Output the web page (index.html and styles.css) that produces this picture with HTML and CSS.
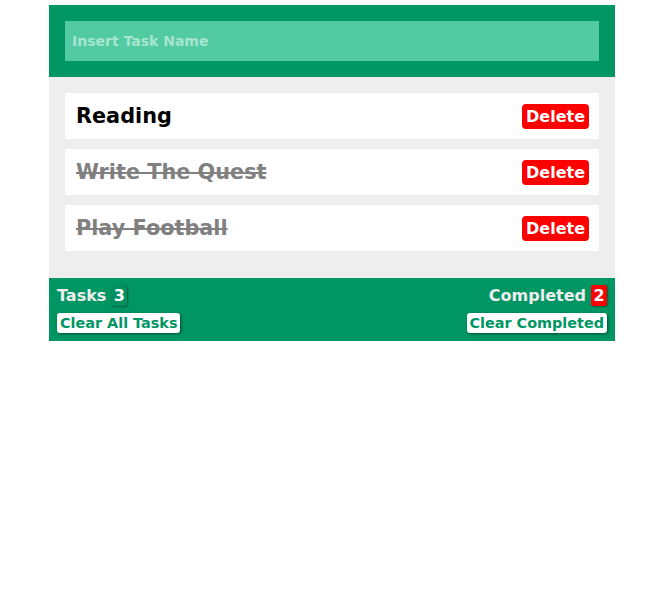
FILE: index.html
```html
<!DOCTYPE html>
<html>
<head>
<meta charset="utf-8">
<link rel="stylesheet" href="styles.css">
</head>
<body>
<div class="app">
  <div class="header">
    <input class="task-input" type="text" placeholder="Insert Task Name">
  </div>
  <div class="tasks">
    <div class="task"><span class="name">Reading</span><button class="delete">Delete</button></div>
    <div class="task done"><span class="name">Write The Quest</span><button class="delete">Delete</button></div>
    <div class="task done"><span class="name">Play Football</span><button class="delete">Delete</button></div>
  </div>
  <div class="footer">
    <div class="col">
      <div class="stat">Tasks <span class="badge">3</span></div>
      <button class="clear">Clear All Tasks</button>
    </div>
    <div class="col right">
      <div class="stat">Completed <span class="badge red">2</span></div>
      <button class="clear">Clear Completed</button>
    </div>
  </div>
</div>
</body>
</html>
```
FILE: styles.css
```css
body {
  margin: 0;
  padding: 5px 0 0;
  font-family: "DejaVu Sans", sans-serif;
  background: #fff;
}
.app {
  width: 566px;
  margin-left: 49px;
}
.header {
  background: #009664;
  padding: 16px;
}
.task-input {
  display: block;
  box-sizing: border-box;
  width: 100%;
  height: 40px;
  border: none;
  outline: none;
  background: #52caa2;
  padding: 0 7px;
  font-family: "DejaVu Sans", sans-serif;
  font-weight: bold;
  font-size: 14px;
  color: #fff;
}
.task-input::placeholder {
  color: #a7e6cf;
}
.tasks {
  background: #eee;
  padding: 16px 16px 17px;
}
.task {
  background: #fff;
  height: 46px;
  display: flex;
  align-items: center;
  justify-content: space-between;
  padding: 0 10px 0 11px;
  margin-bottom: 10px;
}
.name {
  font-size: 20.8px;
  font-weight: bold;
  color: #000;
}
.done .name {
  color: #808080;
  text-decoration: line-through;
}
.delete {
  background: #f00;
  color: #fff;
  border: none;
  border-radius: 4px;
  height: 25px;
  padding: 0 4px;
  font-family: "DejaVu Sans", sans-serif;
  font-weight: bold;
  font-size: 16px;
}
.footer {
  background: #009664;
  height: 63px;
  box-sizing: border-box;
  padding: 7px 8px 0;
  display: flex;
  justify-content: space-between;
}
.col {
  display: flex;
  flex-direction: column;
  align-items: flex-start;
}
.col.right {
  align-items: flex-end;
}
.stat {
  font-size: 16px;
  font-weight: bold;
  color: #eee;
  height: 21px;
  display: flex;
  align-items: center;
}
.badge {
  display: inline-block;
  margin-left: 5px;
  background: #00905f;
  color: #fff;
  min-width: 16px;
  height: 21px;
  line-height: 21px;
  text-align: center;
  box-shadow: 1px 1px 2px rgba(0,0,0,0.4);
  border-radius: 2px;
}
.badge.red {
  background: #f00;
  margin-left: 5px;
}
.clear {
  margin-top: 7px;
  background: #fff;
  color: #009664;
  border: none;
  border-radius: 3px;
  height: 20px;
  padding: 0 3px;
  font-family: "DejaVu Sans", sans-serif;
  font-weight: bold;
  font-size: 14.4px;
  box-shadow: 1px 1px 3px rgba(0,0,0,0.5);
}
```
